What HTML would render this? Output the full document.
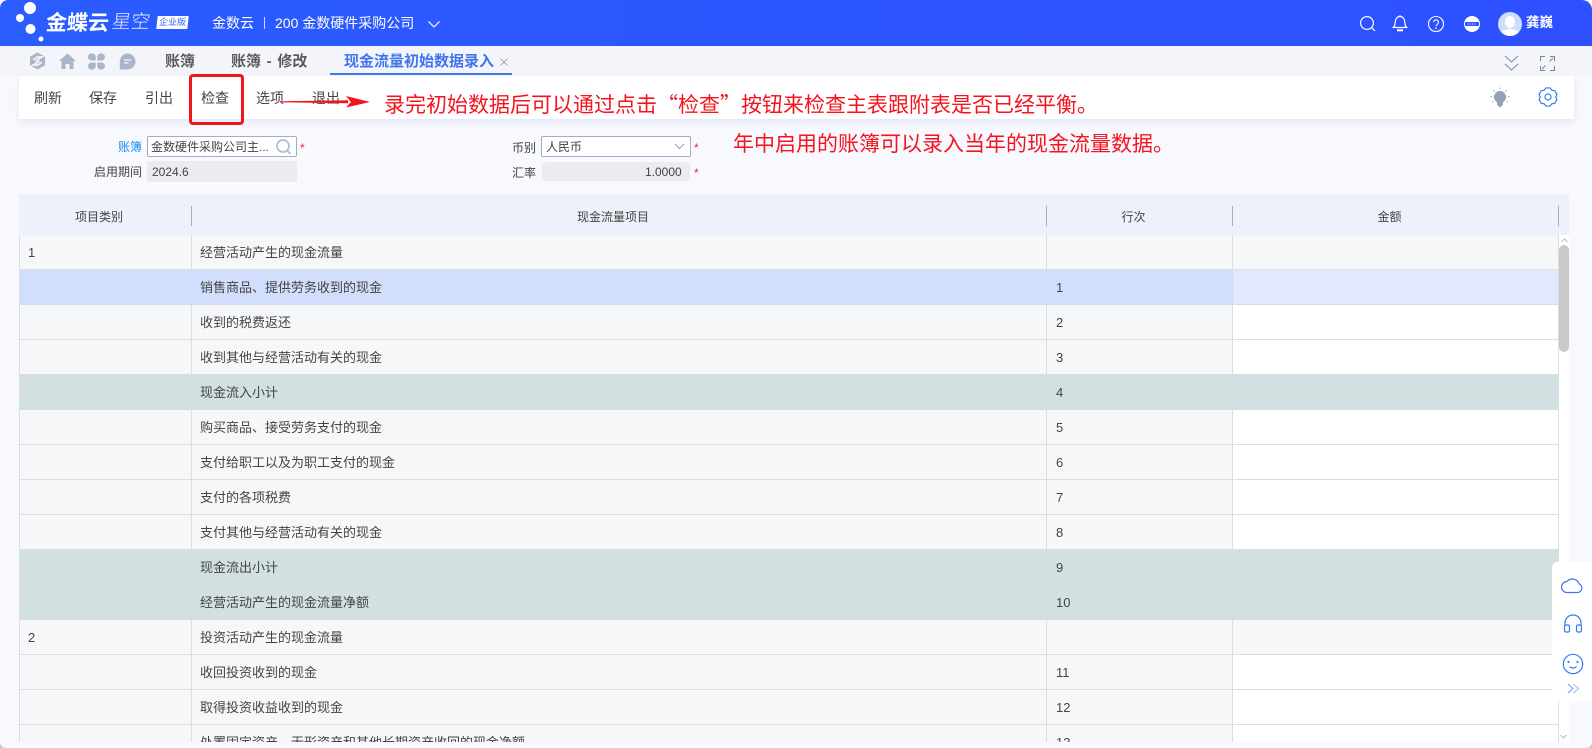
<!DOCTYPE html>
<html lang="zh">
<head>
<meta charset="utf-8">
<style>
html,body{margin:0;padding:0;width:1592px;height:748px;overflow:hidden;background:#f8f9fe;}
body{position:relative;font-family:"Liberation Sans","Noto Sans CJK SC",sans-serif;font-size:13px;color:#444;}
.a{position:absolute;white-space:nowrap;line-height:1;}
svg{position:absolute;display:block;overflow:visible;}
#top{position:absolute;left:0;top:0;width:1592px;height:46px;background:linear-gradient(90deg,#2a5cff,#2e50ff);border-radius:8px 10px 0 0;}
#tabs{position:absolute;left:0;top:46px;width:1592px;height:30px;background:#f3f5fa;}
#tool{position:absolute;left:19px;top:76px;width:1555px;height:43px;background:#fff;box-shadow:0 3px 6px rgba(210,216,240,.5);}
#tbl{position:absolute;left:19px;top:194px;width:1550px;height:548px;overflow:hidden;}
.hd{position:absolute;left:0;top:0;width:1550px;height:41px;background:#eef1f9;}
.hd span{position:absolute;top:16px;font-size:12px;line-height:14px;color:#444;text-align:center;}
.hd i{position:absolute;top:12px;width:1px;height:20px;background:#a9adb5;}
.r{position:absolute;left:0;width:1540px;height:35px;}
.r b{position:absolute;top:0;height:34px;border-bottom:1px solid #dcdddf;border-right:1px solid #dcdddf;font-weight:400;font-size:13px;line-height:35px;color:#444;background:#f6f7f9;box-sizing:content-box;}
.c1{left:0;padding-left:9px;width:163px;}
.c2{left:173px;width:846px;padding-left:8px;}
.c3{left:1028px;width:176px;padding-left:9px;}
.c4{left:1214px;width:325px;background:#fff !important;}
.sel b{background:#d1dffc !important;border-color:#d5dcea;}
.sel .c4{background:#e2e9fc !important;}
.s b{background:#d3e0e2 !important;border-right-color:#d3e0e2;border-bottom-color:#d3e0e2;}
.s .c4{background:#d3e0e2 !important;}
.red{color:#f5222d;}
.note{font-family:"Noto Sans CJK SC","Liberation Sans",sans-serif;font-size:21px;color:#f5141e;}
</style>
</head>
<body>
<div id="top"></div>
<svg style="left:0;top:0" width="60" height="46"><circle cx="30" cy="8" r="6" fill="#fff"/><circle cx="20" cy="18" r="4" fill="#fff"/><circle cx="30.500" cy="29" r="5" fill="#fff"/><circle cx="41" cy="39" r="2.500" fill="#fff"/></svg>
<div class="a" style="left:46px;top:13px;font-size:21px;font-weight:700;color:#fff;transform:skewX(-4deg);">金蝶云</div>
<div class="a" style="left:112px;top:13px;font-size:19px;font-weight:300;color:#e4ebff;transform:skewX(-8deg);">星空</div>
<div class="a" style="left:157px;top:16px;width:31px;height:13px;background:#fff;color:#2a5cff;font-size:9px;line-height:13px;text-align:center;transform:skewX(-6deg);">企业版</div>
<div class="a" style="left:212px;top:16px;font-size:14px;color:#fff;">金数云</div>
<div class="a" style="left:264px;top:17px;width:1px;height:12px;background:#cfdaff;"></div>
<div class="a" style="left:275px;top:16px;font-size:14px;color:#fff;">200 金数硬件采购公司</div>
<svg style="left:427px;top:20px" width="14" height="9"><path d="M1.500 1.500L7 7L12.500 1.500" fill="none" stroke="#e8edff" stroke-width="1.300"/></svg>

<svg style="left:1360px;top:16px" width="16" height="16"><circle cx="7" cy="7" r="6.400" fill="none" stroke="#fff" stroke-width="1.200"/><path d="M11.700 11.700L15 15" stroke="#fff" stroke-width="1.200"/></svg>
<svg style="left:1392px;top:14px" width="16" height="19"><path d="M1 13.500c1.800-1 2.200-3 2.200-5.500 0-3 2-5.500 4.800-5.500s4.800 2.500 4.800 5.500c0 2.500.4 4.500 2.200 5.500z" fill="none" stroke="#fff" stroke-width="1.200" stroke-linejoin="round"/><path d="M5 16.300h6" stroke="#fff" stroke-width="2"/><path d="M8 1v1.500" stroke="#fff"/></svg>
<svg style="left:1428px;top:16px" width="16" height="16"><circle cx="8" cy="8" r="7.500" fill="none" stroke="#fff" stroke-width="1.100"/><path d="M5.600 6.200a2.400 2.400 0 1 1 3.700 2.100c-.9.600-1.300 1-1.300 2" fill="none" stroke="#fff" stroke-width="1.100"/><circle cx="8" cy="12.200" r=".8" fill="#fff"/></svg>
<svg style="left:1464px;top:16px" width="16" height="16"><circle cx="8" cy="8" r="8" fill="#fff"/><rect x="1" y="6" width="14" height="4" rx="1" fill="#2e50ff"/><path d="M3.500 8h9" stroke="#fff" stroke-width="1" stroke-dasharray="1 1.300"/></svg>
<svg style="left:1498px;top:12px" width="24" height="24"><defs><clipPath id="av"><circle cx="12" cy="12" r="12"/></clipPath></defs><circle cx="12" cy="12" r="12" fill="#cfdcfa"/><g clip-path="url(#av)" fill="#fff"><ellipse cx="12" cy="10" rx="5" ry="6"/><ellipse cx="12" cy="23" rx="10" ry="6"/></g></svg>
<div class="a" style="left:1526px;top:16px;font-size:13.500px;color:#fff;font-weight:700;">龚巍</div>

<div id="tabs"></div>
<svg style="left:29px;top:52px" width="17" height="18"><path d="M8.500 0.500L16 4.700V13.300L8.500 17.500L1 13.300V4.700Z" fill="#abb5c9"/><path d="M4 7.700L8.500 5H13L6.500 9M13 10.300L8.500 13H4L10.500 9" fill="none" stroke="#f3f5fa" stroke-width="1.700"/></svg>
<svg style="left:59px;top:53px" width="17" height="16"><path d="M8.500 0.500L17 8H14.500V16H10.500V11H6.500V16H2.500V8H0Z" fill="#abb5c9"/></svg>
<svg style="left:88px;top:53px" width="17" height="17"><path d="M3.500 0.500a3.500 3.500 0 0 0 0 7H7.700V3.500A3.500 3.500 0 0 0 3.500 0.500Z" fill="#abb5c9"/><path d="M13.500 0.500a3.500 3.500 0 0 1 0 7H9.300V3.500A3.500 3.500 0 0 1 13.500 0.500Z" fill="#abb5c9"/><path d="M3.500 16.500a3.500 3.500 0 0 1 0-7H7.700V13.500A3.500 3.500 0 0 1 3.500 16.500Z" fill="#abb5c9"/><path d="M13.500 16.500a3.500 3.500 0 0 0 0-7H9.300V13.500A3.500 3.500 0 0 0 13.500 16.500Z" fill="#abb5c9"/></svg>
<svg style="left:119px;top:53px" width="17" height="17"><path d="M8.500 0.500a8 8 0 1 1 0 16H0.800V8.500A8 8 0 0 1 8.500 0.500Z" fill="#abb5c9"/><path d="M5 7h7M5 10h4.500" stroke="#f3f5fa" stroke-width="1.300"/></svg>
<div class="a" style="left:165px;top:54px;font-size:15px;font-weight:700;color:#5a5a5a;">账簿</div>
<div class="a" style="left:231px;top:54px;font-size:15px;font-weight:700;color:#5a5a5a;word-spacing:1.500px;">账簿 - 修改</div>
<div class="a" style="left:344px;top:54px;font-size:15px;font-weight:700;color:#3f74ee;">现金流量初始数据录入</div>
<svg style="left:500px;top:58px" width="8" height="8"><path d="M0.500 0.500L7.500 7.500M7.500 0.500L0.500 7.500" stroke="#8d929c" stroke-width="0.800"/></svg>
<div class="a" style="left:330px;top:73px;width:182px;height:2px;background:#3a78f2;"></div>
<svg style="left:1504px;top:55px" width="15" height="16"><path d="M1 1L7.500 7L14 1M1 9L7.500 15L14 9" fill="none" stroke="#7b8398" stroke-width="1"/></svg>
<svg style="left:1540px;top:56px" width="15" height="15"><path d="M0.500 5V0.500H5M10 0.500H14.500V5M14.500 10V14.500H10M5 14.500H0.500V10" fill="none" stroke="#7b8398" stroke-width="1"/><path d="M9.500 5.500L13 2M5.500 9.500L2 13" stroke="#7b8398" stroke-width="1"/></svg>

<div id="tool"></div>
<div class="a" style="left:34px;top:91px;font-size:14px;">刷新</div>
<div class="a" style="left:89px;top:91px;font-size:14px;">保存</div>
<div class="a" style="left:145px;top:91px;font-size:14px;">引出</div>
<div class="a" style="left:201px;top:91px;font-size:14px;">检查</div>
<div class="a" style="left:256px;top:91px;font-size:14px;">选项</div>
<div class="a" style="left:312px;top:91px;font-size:14px;">退出</div>
<svg style="left:1490px;top:87px" width="20" height="21"><path d="M10 4a6 6 0 0 1 3.800 10.600c-.7.6-1 1.300-1 2.300v1L10 20.500L7.200 18V16.900c0-1-.3-1.700-1-2.300A6 6 0 0 1 10 4Z" fill="#959fb8"/><path d="M10 0.500V2.500M3.500 3L5 4.500M16.500 3L15 4.500M0.500 9.500H2.500M17.500 9.500H19.500M2 15L3.500 14M18 15L16.500 14" stroke="#b3bac9" stroke-width="1.100"/></svg>
<svg style="left:1538px;top:87px" width="20" height="20"><path d="M7.910 .94L12.090 .94L13.900 3.250L16.800 3.660L18.890 7.280L17.800 10L18.890 12.720L16.800 16.340L13.900 16.750L12.090 19.060L7.910 19.060L6.100 16.750L3.200 16.340L1.110 12.720L2.200 10L1.110 7.280L3.200 3.660L6.100 3.250Z" fill="none" stroke="#3a78f2" stroke-width="1.200" stroke-linejoin="round"/><circle cx="10" cy="10" r="3" fill="none" stroke="#3a78f2" stroke-width="1.200"/></svg>

<div style="position:absolute;left:189px;top:74px;width:55px;height:51px;box-sizing:border-box;border:3px solid #f0141e;border-radius:4px;"></div>
<svg style="left:278px;top:94px" width="94" height="16"><path d="M2 7.300L70 6.300L70 9.300L2 8.200Z" fill="#f5141e"/><path d="M68 2L92 8L68 13.500L73 8Z" fill="#f5141e"/></svg>
<div class="a note" style="left:384px;top:94px;">录完初始数据后可以通过点击“检查”按钮来检查主表跟附表是否已经平衡。</div>
<div class="a note" style="left:733px;top:133px;">年中启用的账簿可以录入当年的现金流量数据。</div>

<div class="a" style="left:118px;top:141px;font-size:12px;color:#1f8cf0;">账簿</div>
<div style="position:absolute;left:147px;top:136px;width:150px;height:21px;box-sizing:border-box;border:1px solid #a2aec4;border-radius:2px;background:#fff;"></div>
<div class="a" style="left:151px;top:141px;font-size:12px;">金数硬件采购公司主...</div>
<svg style="left:275px;top:138px" width="18" height="17"><circle cx="8" cy="8" r="6" fill="none" stroke="#adc0d8" stroke-width="1.800"/><path d="M12 12.500L15.500 16" stroke="#adc0d8" stroke-width="1.800"/></svg>
<div class="a red" style="left:300px;top:142px;font-size:12px;">*</div>
<div class="a" style="left:94px;top:166px;font-size:12px;">启用期间</div>
<div style="position:absolute;left:147px;top:161px;width:150px;height:21px;background:#eaecf0;border-radius:2px;"></div>
<div class="a" style="left:152px;top:166px;font-size:12px;">2024.6</div>
<div class="a" style="left:512px;top:142px;font-size:12px;">币别</div>
<div style="position:absolute;left:541px;top:136px;width:150px;height:21px;box-sizing:border-box;border:1px solid #a2aec4;border-radius:2px;background:#fff;"></div>
<div class="a" style="left:546px;top:141px;font-size:12px;">人民币</div>
<svg style="left:674px;top:143px" width="11" height="7"><path d="M1 1L5.500 5.500L10 1" fill="none" stroke="#9aa4b4" stroke-width="1.100"/></svg>
<div class="a red" style="left:694px;top:142px;font-size:12px;">*</div>
<div class="a" style="left:512px;top:167px;font-size:12px;">汇率</div>
<div style="position:absolute;left:542px;top:162px;width:148px;height:19px;background:#eaecf0;border-radius:4px;"></div>
<div class="a" style="left:645px;top:166px;font-size:12px;">1.0000</div>
<div class="a red" style="left:694px;top:167px;font-size:12px;">*</div>

<div id="tbl">
<div class="hd">
<span style="left:0;width:160px;">项目类别</span><i style="left:172px;"></i>
<span style="left:173px;width:842px;">现金流量项目</span><i style="left:1027px;"></i>
<span style="left:1028px;width:173px;">行次</span><i style="left:1213px;"></i>
<span style="left:1214px;width:313px;">金额</span><i style="left:1539px;"></i>
</div>
<div class="r" style="top:41px"><b class="c1">1</b><b class="c2">经营活动产生的现金流量</b><b class="c3"></b><b class="c4" style="background:#f6f7f9 !important"></b></div>
<div class="r sel" style="top:76px"><b class="c1"></b><b class="c2">销售商品、提供劳务收到的现金</b><b class="c3">1</b><b class="c4"></b></div>
<div class="r" style="top:111px"><b class="c1"></b><b class="c2">收到的税费返还</b><b class="c3">2</b><b class="c4"></b></div>
<div class="r" style="top:146px"><b class="c1"></b><b class="c2">收到其他与经营活动有关的现金</b><b class="c3">3</b><b class="c4"></b></div>
<div class="r s" style="top:181px"><b class="c1"></b><b class="c2">现金流入小计</b><b class="c3">4</b><b class="c4"></b></div>
<div class="r" style="top:216px"><b class="c1"></b><b class="c2">购买商品、接受劳务支付的现金</b><b class="c3">5</b><b class="c4"></b></div>
<div class="r" style="top:251px"><b class="c1"></b><b class="c2">支付给职工以及为职工支付的现金</b><b class="c3">6</b><b class="c4"></b></div>
<div class="r" style="top:286px"><b class="c1"></b><b class="c2">支付的各项税费</b><b class="c3">7</b><b class="c4"></b></div>
<div class="r" style="top:321px"><b class="c1"></b><b class="c2">支付其他与经营活动有关的现金</b><b class="c3">8</b><b class="c4"></b></div>
<div class="r s" style="top:356px"><b class="c1"></b><b class="c2">现金流出小计</b><b class="c3">9</b><b class="c4"></b></div>
<div class="r s" style="top:391px"><b class="c1"></b><b class="c2">经营活动产生的现金流量净额</b><b class="c3">10</b><b class="c4"></b></div>
<div class="r" style="top:426px"><b class="c1">2</b><b class="c2">投资活动产生的现金流量</b><b class="c3"></b><b class="c4" style="background:#f6f7f9 !important"></b></div>
<div class="r" style="top:461px"><b class="c1"></b><b class="c2">收回投资收到的现金</b><b class="c3">11</b><b class="c4"></b></div>
<div class="r" style="top:496px"><b class="c1"></b><b class="c2">取得投资收益收到的现金</b><b class="c3">12</b><b class="c4"></b></div>
<div class="r" style="top:531px"><b class="c1"></b><b class="c2">处置固定资产、无形资产和其他长期资产收回的现金净额</b><b class="c3">13</b><b class="c4"></b></div>
<div style="position:absolute;left:0;top:41px;width:1px;height:507px;background:#dcdddf;"></div>
<div style="position:absolute;left:1540px;top:41px;width:10px;height:507px;background:#fff;"></div>
<div style="position:absolute;left:1540px;top:51px;width:10px;height:107px;background:#c9c9c9;border-radius:5px;"></div>
<svg style="left:1542px;top:44px" width="7" height="5"><path d="M0.500 4L3.500 1L6.500 4" fill="none" stroke="#aaa" stroke-width="0.800"/></svg>
<svg style="left:1541px;top:540px" width="7" height="5"><path d="M0.500 1L3.500 4L6.500 1" fill="none" stroke="#aaa" stroke-width="0.800"/></svg>
</div>

<div style="position:absolute;left:1552px;top:562px;width:40px;height:139px;background:#fff;border-radius:5px 0 0 5px;"></div>
<svg style="left:1561px;top:576px" width="22" height="18"><path d="M6 16.500H16.500a4.500 4.500 0 0 0 1.500-8.700A7 7 0 0 0 6 5.500a5.500 5.500 0 0 0 0 11Z" fill="none" stroke="#3a78f2" stroke-width="1.200"/></svg>
<svg style="left:1563px;top:614px" width="20" height="20"><path d="M2 12V9a8 8 0 0 1 16 0v3" fill="none" stroke="#3a78f2" stroke-width="1.200"/><rect x="1.500" y="11" width="5" height="7" rx="1.500" fill="none" stroke="#3a78f2" stroke-width="1.200"/><rect x="13.500" y="11" width="5" height="7" rx="1.500" fill="none" stroke="#3a78f2" stroke-width="1.200"/></svg>
<svg style="left:1562px;top:653px" width="22" height="22"><circle cx="11" cy="11" r="9.700" fill="none" stroke="#3a78f2" stroke-width="1.200"/><circle cx="6.500" cy="9" r="1.100" fill="#3a78f2"/><circle cx="15.500" cy="9" r="1.100" fill="#3a78f2"/><path d="M7.500 13.500c2 2 5 2 7 0" fill="none" stroke="#3a78f2" stroke-width="1.200"/></svg>
<svg style="left:1567px;top:683px" width="13" height="11"><path d="M1 1L6 5.500L1 10" fill="none" stroke="#6e9af5" stroke-width="1"/><path d="M6.500 1L11.500 5.500L6.500 10" fill="none" stroke="#b5cbfa" stroke-width="1.500"/></svg>
<svg style="left:0;top:741px" width="1592" height="7"><path d="M0 0Q0 7 7 7H0Z" fill="#c9cacd"/><path d="M1592 0Q1592 7 1585 7H1592Z" fill="#c9cacd"/></svg>
</body>
</html>
